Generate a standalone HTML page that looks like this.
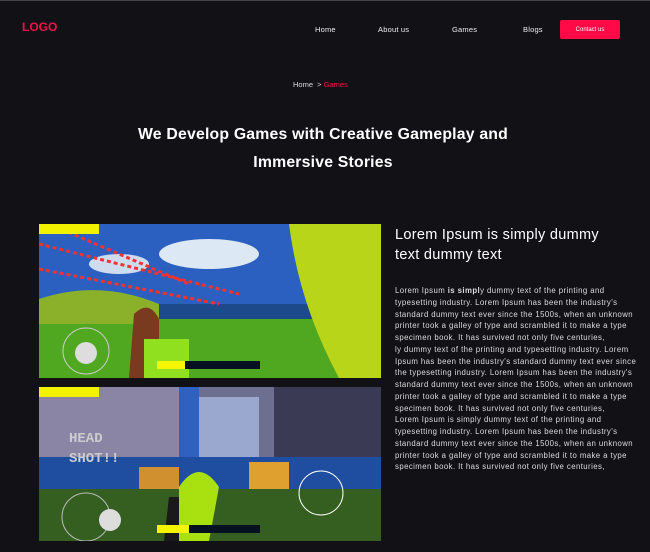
<!DOCTYPE html>
<html><head><meta charset="utf-8"><style>
*{margin:0;padding:0;box-sizing:border-box}
body{width:650px;height:552px;background:#111116;font-family:"Liberation Sans",sans-serif;color:#fff;position:relative;overflow:hidden}
.top{position:absolute;left:0;top:0;width:650px;height:1px;background:#444}
.logo{position:absolute;left:22px;top:20px;font-weight:bold;font-size:12px;color:#f0134a}
.nav a{position:absolute;top:25px;font-size:7.5px;color:#eee;letter-spacing:0.2px}
.btn{position:absolute;left:560px;top:20px;width:60px;height:19px;background:#ff0a47;border-radius:2px;font-size:6px;display:flex;align-items:center;justify-content:center}
.bc{position:absolute;left:293px;top:80px;font-size:7.5px;color:#ddd}
.bc span{color:#f0134a}
h1{position:absolute;left:0;width:646px;top:121px;text-align:center;font-size:15.8px;line-height:28px;font-weight:bold;letter-spacing:0.2px}
h2{position:absolute;left:395px;top:225px;font-size:14.5px;line-height:20px;font-weight:normal;width:225px;letter-spacing:0.3px}
p{position:absolute;left:395px;top:285px;width:255px;font-size:7.8px;line-height:11.75px;color:#ddd;letter-spacing:0.42px;white-space:nowrap}
.img{position:absolute;left:39px;width:342px;height:154px;overflow:hidden}
</style></head><body>
<div class="top"></div>
<div class="logo">LOGO</div>
<div class="nav"><a style="left:315px">Home</a><a style="left:378px">About us</a><a style="left:452px">Games</a><a style="left:523px">Blogs</a></div>
<div class="btn">Contact us</div>
<div class="bc">Home &nbsp;&gt; <span>Games</span></div>
<h1>We Develop Games with Creative Gameplay and<br>Immersive Stories</h1>
<h2>Lorem Ipsum is simply dummy text dummy text</h2>
<p>Lorem Ipsum <b>is simpl</b>y dummy text of the printing and<br>typesetting industry. Lorem Ipsum has been the industry's<br>standard dummy text ever since the 1500s, when an unknown<br>printer took a galley of type and scrambled it to make a type<br>specimen book. It has survived not only five centuries,<br>ly dummy text of the printing and typesetting industry. Lorem<br>Ipsum has been the industry's standard dummy text ever since<br>the typesetting industry. Lorem Ipsum has been the industry's<br>standard dummy text ever since the 1500s, when an unknown<br>printer took a galley of type and scrambled it to make a type<br>specimen book. It has survived not only five centuries,<br>Lorem Ipsum is simply dummy text of the printing and<br>typesetting industry. Lorem Ipsum has been the industry's<br>standard dummy text ever since the 1500s, when an unknown<br>printer took a galley of type and scrambled it to make a type<br>specimen book. It has survived not only five centuries,</p>
<div class="img" style="top:224px"><svg width="342" height="154">
<rect width="342" height="154" fill="#2b5fc0"/>
<ellipse cx="170" cy="30" rx="50" ry="15" fill="#dde8f5"/><ellipse cx="80" cy="40" rx="30" ry="10" fill="#cfdcef"/>
<rect y="80" width="342" height="20" fill="#1d4a8a"/>
<rect y="95" width="342" height="59" fill="#4fa820"/>
<path d="M0 75 Q60 55 120 80 L120 100 L0 100Z" fill="#8bb02a"/>
<path d="M250 0 L342 0 L342 154 L300 154 Q260 80 250 0Z" fill="#b9d51a"/>
<path d="M0 20 L200 70 M0 45 L180 80 M10 0 L150 60" stroke="#e33" stroke-width="3" stroke-dasharray="4 3"/>
<rect x="0" y="0" width="60" height="10" fill="#f2f200"/>
<circle cx="47" cy="127" r="23" fill="none" stroke="#ccc" stroke-width="1"/><circle cx="47" cy="129" r="11" fill="#ddd"/>
<path d="M90 154 L95 90 Q110 75 120 95 L120 154Z" fill="#7a3a20"/>
<rect x="105" y="115" width="45" height="39" fill="#90e020"/>
<rect x="118" y="137" width="103" height="8" fill="#051020"/><rect x="118" y="137" width="28" height="8" fill="#f5f500"/>
</svg></div>
<div class="img" style="top:387px"><svg width="342" height="154">
<rect width="342" height="154" fill="#6c6f90"/>
<rect x="0" y="0" width="140" height="110" fill="#8a85a5"/>
<rect x="160" y="10" width="60" height="100" fill="#9aa8d0"/>
<rect x="235" y="0" width="107" height="110" fill="#3a3a55"/>
<rect x="140" y="0" width="20" height="80" fill="#3060c0"/>
<rect x="0" y="70" width="342" height="35" fill="#1f4ea0"/>
<rect x="100" y="80" width="40" height="25" fill="#d09030"/><rect x="210" y="75" width="40" height="30" fill="#e0a030"/>
<rect y="102" width="342" height="52" fill="#345f20"/>
<text x="30" y="55" font-size="14" font-weight="bold" fill="#ccc" font-family="Liberation Mono,monospace">HEAD</text>
<text x="30" y="75" font-size="14" font-weight="bold" fill="#ccc" font-family="Liberation Mono,monospace">SHOT!!</text>
<rect x="0" y="0" width="60" height="10" fill="#f2f200"/>
<circle cx="47" cy="130" r="24" fill="none" stroke="#bbb"/><circle cx="71" cy="133" r="11" fill="#ddd"/>
<circle cx="282" cy="106" r="22" fill="none" stroke="#fff"/>
<path d="M125 154 L130 110 L160 110 L160 154Z" fill="#1a1a1a"/>
<path d="M140 154 L140 100 Q160 70 180 100 L170 154Z" fill="#a8e010"/>
<rect x="118" y="138" width="103" height="8" fill="#051020"/><rect x="118" y="138" width="32" height="8" fill="#f5f500"/>
</svg></div>
</body></html>
